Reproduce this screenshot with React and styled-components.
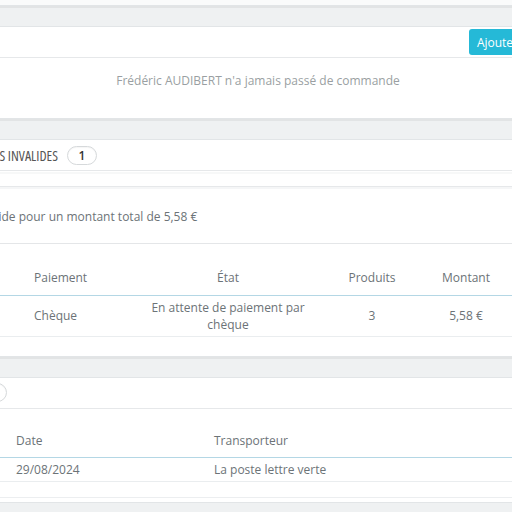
import React from "react";
import styled, { createGlobalStyle } from "styled-components";

const Global = createGlobalStyle`
  html, body { margin: 0; padding: 0; background: #eff1f2; overflow: hidden; }
  body { font-family: "Open Sans", "Liberation Sans", sans-serif; font-size: 12px; color: #6c7377; }
  * { box-sizing: border-box; }
`;

const Page = styled.div`
  width: 764px;
  margin-left: -124px;
  display: flex;
  flex-direction: column;
  gap: 20px;
`;

const Panel = styled.section`
  background: #fff;
  border: 1px solid #e2e5e7;
  box-shadow: 0 2px 0 rgba(0, 0, 0, 0.05);
`;

const StubPanel = styled(Panel)`
  height: 6px;
  border-top: none;
  background: #fafbfb;
`;

const Heading = styled.header`
  height: 31px;
  border-bottom: 1px solid #e6e8ea;
  display: flex;
  align-items: center;
  padding: 0 22px 0 ${(p) => p.$indent || 10}px;
  font-family: "Open Sans", sans-serif;
  font-stretch: 80%;
  font-size: 14px;
  text-transform: uppercase;
  color: #555;
`;

const Title = styled.span`
  white-space: nowrap;
`;

const Badge = styled.span`
  margin-left: 9px;
  height: 19px;
  min-width: 30px;
  padding: 0 10px;
  border: 1px solid #d6d9db;
  border-radius: 10px;
  display: inline-flex;
  align-items: center;
  justify-content: center;
  font-family: "Open Sans", sans-serif;
  font-stretch: 100%;
  font-size: 12px;
  font-weight: 600;
  color: #333;
  box-shadow: inset 0 1px 1px rgba(0, 0, 0, 0.04);
`;

const Button = styled.button`
  margin-left: auto;
  height: 26px;
  padding: 0 8px;
  border: none;
  border-radius: 3px;
  background: #25b9d7;
  color: #fff;
  font-family: "Open Sans", sans-serif;
  font-stretch: 100%;
  font-size: 12px;
  text-transform: none;
  white-space: nowrap;
`;

const EmptyBody = styled.div`
  height: 60px;
  display: flex;
  justify-content: center;
  padding-top: 14px;
  color: #9a9fa2;
`;

const Strip = styled.div`
  height: 16px;
  border-top: 1px solid #fff;
  border-bottom: 1px solid #e6e8ea;
  box-shadow: inset 0 2px 0 #f7f8f8;
`;

const Summary = styled.div`
  height: 57px;
  border-top: 2px solid #f5f6f7;
  border-bottom: 1px solid #e4e6e8;
  display: flex;
  align-items: center;
  padding-left: ${(p) => p.$indent}px;
  white-space: nowrap;
  color: #6c7377;
`;

const TableArea = styled.div`
  padding: ${(p) => p.$top}px 0 ${(p) => p.$bottom}px;
`;

const Table = styled.table`
  width: 100%;
  table-layout: fixed;
  border-collapse: collapse;
`;

const Th = styled.th`
  height: 34px;
  padding: 0 8px;
  font-weight: 400;
  color: #6c7377;
  text-align: ${(p) => p.$align || "left"};
  border-bottom: 1px solid #b4d7e5;
  white-space: nowrap;
`;

const Td = styled.td`
  padding: 3px 8px 3px;
  line-height: 17px;
  color: #6c7377;
  text-align: ${(p) => p.$align || "left"};
  border-bottom: 1px solid #eaedef;
`;

const Foot = styled.div`
  height: 16px;
  border-bottom: 1px solid #eceef0;
  margin-bottom: 4px;
`;

export default function App() {
  return (
    <>
      <Global />
      <Page>
        <StubPanel />

        <Panel>
          <Heading>
            <Title>Commandes</Title>
            <Button>Ajouter une commande</Button>
          </Heading>
          <EmptyBody>Frédéric AUDIBERT n'a jamais passé de commande</EmptyBody>
        </Panel>

        <Panel>
          <Heading $indent={62}>
            <Title>Commandes invalides</Title>
            <Badge>1</Badge>
          </Heading>
          <Strip />
          <Summary $indent={19}>1 commande invalide pour un montant total de 5,58 €</Summary>
          <TableArea $top={17} $bottom={19}>
            <Table>
              <colgroup>
                <col style={{ width: 40 }} />
                <col style={{ width: 109 }} />
                <col style={{ width: 105 }} />
                <col style={{ width: 194 }} />
                <col style={{ width: 94 }} />
                <col style={{ width: 94 }} />
                <col style={{ width: 128 }} />
              </colgroup>
              <thead>
                <tr>
                  <Th>ID</Th>
                  <Th>Date</Th>
                  <Th>Paiement</Th>
                  <Th $align="center">État</Th>
                  <Th $align="center">Produits</Th>
                  <Th $align="center">Montant</Th>
                  <Th></Th>
                </tr>
              </thead>
              <tbody>
                <tr>
                  <Td>12</Td>
                  <Td>29/08/2024</Td>
                  <Td>Chèque</Td>
                  <Td $align="center">En attente de paiement par chèque</Td>
                  <Td $align="center">3</Td>
                  <Td $align="center">5,58 €</Td>
                  <Td></Td>
                </tr>
              </tbody>
            </Table>
          </TableArea>
        </Panel>

        <Panel>
          <Heading $indent={50}>
            <Title>Paniers</Title>
            <Badge>1</Badge>
          </Heading>
          <TableArea $top={15} $bottom={0}>
            <Table>
              <colgroup>
                <col style={{ width: 131 }} />
                <col style={{ width: 198 }} />
                <col style={{ width: 300 }} />
                <col style={{ width: 135 }} />
              </colgroup>
              <thead>
                <tr>
                  <Th>ID</Th>
                  <Th>Date</Th>
                  <Th>Transporteur</Th>
                  <Th>Total</Th>
                </tr>
              </thead>
              <tbody>
                <tr>
                  <Td>8</Td>
                  <Td>29/08/2024</Td>
                  <Td>La poste lettre verte</Td>
                  <Td>5,58 €</Td>
                </tr>
              </tbody>
            </Table>
            <Foot />
          </TableArea>
        </Panel>
      </Page>
    </>
  );
}
